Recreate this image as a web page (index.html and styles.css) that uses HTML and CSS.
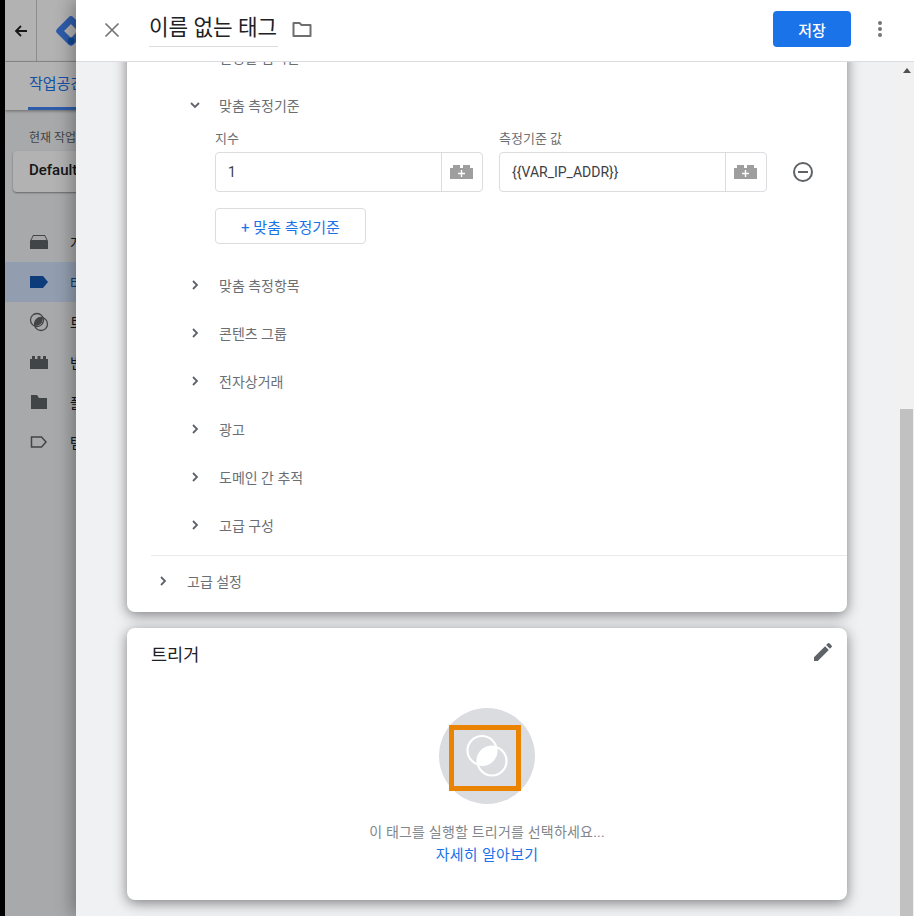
FILE: index.html
```html
<!DOCTYPE html>
<html lang="ko">
<head>
<meta charset="utf-8">
<title>이름 없는 태그</title>
<link rel="stylesheet" href="styles.css">
</head>
<body>
<div class="edge"></div>
<div class="stage">
  <div class="app">
    <div class="app-top">
      <div class="back">
        <svg width="16" height="16" viewBox="0 0 16 16"><path d="M14 8H3M8 3L3 8l5 5" fill="none" stroke="#202124" stroke-width="1.800"/></svg>
      </div>
      <svg class="logo" width="32" height="32" viewBox="0 0 32 32"><path d="M16 4.500L4.500 16 16 27.500 27.500 16z" fill="none" stroke="#4285f4" stroke-width="6.500" stroke-linejoin="round"/><circle cx="16" cy="26" r="3.500" fill="#1967d2"/></svg>
    </div>
    <div class="app-tabs"><span class="app-tab">작업공간</span></div>
    <div class="app-side">
      <div class="ws-label">현재 작업공간</div>
      <div class="ws-select">Default Workspace</div>
      <nav class="nav">
        <div class="nav-item"><svg width="20" height="20" viewBox="0 0 20 20"><path d="M4 3h12l3 6v8H1V9z" fill="#5f6368"/><path d="M4.500 4h11l2 4h-15z" fill="#eee"/></svg><span>개요</span></div>
        <div class="nav-item active"><svg width="20" height="20" viewBox="0 0 20 20"><path d="M1 4h13l5 6-5 6H1z" fill="#1557b0"/></svg><span>태그</span></div>
        <div class="nav-item"><svg width="20" height="20" viewBox="0 0 20 20"><circle cx="8" cy="8" r="6.500" fill="none" stroke="#5f6368" stroke-width="1.300"/><circle cx="12" cy="12" r="6.500" fill="none" stroke="#5f6368" stroke-width="1.300"/><path d="M13.500 5.700a6.500 6.500 0 0 1-7.800 7.800a6.500 6.500 0 0 1 7.800-7.800z" fill="#5f6368"/></svg><span>트리거</span></div>
        <div class="nav-item"><svg width="20" height="20" viewBox="0 0 20 20"><path d="M1 7h2V4h3v3h2.500V4h3v3H14V4h3v3h2v10H1z" fill="#5f6368"/></svg><span>변수</span></div>
        <div class="nav-item"><svg width="20" height="20" viewBox="0 0 20 20"><path d="M2 3h6l2 3h8v11H2z" fill="#5f6368"/></svg><span>폴더</span></div>
        <div class="nav-item"><svg width="20" height="20" viewBox="0 0 20 20"><path d="M2.500 5h10l4.500 5-4.500 5h-10z" fill="none" stroke="#5f6368" stroke-width="1.500"/></svg><span>템플릿</span></div>
      </nav>
    </div>
  </div>
  <div class="scrim"></div>

  <section class="sheet">
    <header class="sheet-head">
      <button class="icon-btn close" aria-label="닫기">
        <svg width="24" height="24" viewBox="0 0 24 24"><path d="M5.500 5.500l13 13M18.500 5.500l-13 13" fill="none" stroke="#757575" stroke-width="1.700"/></svg>
      </button>
      <h1 class="title">이름 없는 태그</h1>
      <svg class="folder" width="24" height="24" viewBox="0 0 24 24"><path d="M3.500 6h6l2 2h9v11h-17z" fill="none" stroke="#6e6e6e" stroke-width="2" stroke-linejoin="round"/></svg>
      <div class="spacer"></div>
      <button class="save">저장</button>
      <button class="icon-btn more" aria-label="더보기">
        <svg width="24" height="24" viewBox="0 0 24 24"><circle cx="12" cy="6" r="2" fill="#757575"/><circle cx="12" cy="12" r="2" fill="#757575"/><circle cx="12" cy="18" r="2" fill="#757575"/></svg>
      </button>
    </header>
    <div class="sheet-body">
      <div class="scroller">
        <div class="card config">
          <div class="nested">
            <div class="row"><svg class="chev" width="24" height="24" viewBox="0 0 24 24"><path d="M10 8l4 4-4 4" fill="none" stroke="#5f6368" stroke-width="1.800"/></svg><span>설정할 입력란</span></div>
            <div class="row"><svg class="chev" width="24" height="24" viewBox="0 0 24 24"><path d="M8 10l4 4 4-4" fill="none" stroke="#5f6368" stroke-width="1.800"/></svg><span>맞춤 측정기준</span></div>
            <div class="dims">
              <div class="dim-grid">
                <div class="field">
                  <label class="field-label">지수</label>
                  <div class="input"><span class="input-val">1</span><span class="input-btn"><svg width="24" height="14" viewBox="0 0 24 14"><path class="brick" fill-rule="evenodd" d="M0 3h3V0h7v3h3V0h7v3h3v11H0zM10.800 7.800H8v1.400h2.800V12h1.400V9.200H15V7.800h-2.800V5h-1.400z"/></svg></span></div>
                </div>
                <div class="field">
                  <label class="field-label">측정기준 값</label>
                  <div class="input"><span class="input-val">{{VAR_IP_ADDR}}</span><span class="input-btn"><svg width="24" height="14" viewBox="0 0 24 14"><path class="brick" fill-rule="evenodd" d="M0 3h3V0h7v3h3V0h7v3h3v11H0zM10.800 7.800H8v1.400h2.800V12h1.400V9.200H15V7.800h-2.800V5h-1.400z"/></svg></span></div>
                </div>
                <svg class="minus" width="24" height="24" viewBox="0 0 24 24"><circle cx="12" cy="12" r="9" fill="none" stroke="#5f6368" stroke-width="2"/><path d="M7 12h10" stroke="#5f6368" stroke-width="2"/></svg>
              </div>
              <button class="add-btn">+ 맞춤 측정기준</button>
            </div>
            <div class="row"><svg class="chev" width="24" height="24" viewBox="0 0 24 24"><path d="M10 8l4 4-4 4" fill="none" stroke="#5f6368" stroke-width="1.800"/></svg><span>맞춤 측정항목</span></div>
            <div class="row"><svg class="chev" width="24" height="24" viewBox="0 0 24 24"><path d="M10 8l4 4-4 4" fill="none" stroke="#5f6368" stroke-width="1.800"/></svg><span>콘텐츠 그룹</span></div>
            <div class="row"><svg class="chev" width="24" height="24" viewBox="0 0 24 24"><path d="M10 8l4 4-4 4" fill="none" stroke="#5f6368" stroke-width="1.800"/></svg><span>전자상거래</span></div>
            <div class="row"><svg class="chev" width="24" height="24" viewBox="0 0 24 24"><path d="M10 8l4 4-4 4" fill="none" stroke="#5f6368" stroke-width="1.800"/></svg><span>광고</span></div>
            <div class="row"><svg class="chev" width="24" height="24" viewBox="0 0 24 24"><path d="M10 8l4 4-4 4" fill="none" stroke="#5f6368" stroke-width="1.800"/></svg><span>도메인 간 추적</span></div>
            <div class="row"><svg class="chev" width="24" height="24" viewBox="0 0 24 24"><path d="M10 8l4 4-4 4" fill="none" stroke="#5f6368" stroke-width="1.800"/></svg><span>고급 구성</span></div>
          </div>
          <div class="advanced">
            <div class="row"><svg class="chev" width="24" height="24" viewBox="0 0 24 24"><path d="M10 8l4 4-4 4" fill="none" stroke="#5f6368" stroke-width="1.800"/></svg><span>고급 설정</span></div>
          </div>
        </div>

        <div class="card trigger">
          <div class="trigger-head">
            <h2 class="trigger-title">트리거</h2>
            <svg class="pencil" width="24" height="24" viewBox="0 0 24 24"><path d="M3 17.250V21h3.750L17.810 9.940l-3.750-3.750zM20.710 7.040a1 1 0 0 0 0-1.410l-2.340-2.340a1 1 0 0 0-1.410 0l-1.830 1.830 3.750 3.750z" fill="#5f6368"/></svg>
          </div>
          <div class="trigger-empty">
            <div class="trigger-circle">
              <svg width="96" height="96" viewBox="0 0 96 96">
                <defs><clipPath id="overlap"><circle cx="43" cy="42.500" r="14.500"/></clipPath></defs>
                <circle cx="53" cy="53" r="14.500" fill="#fff" clip-path="url(#overlap)"/>
                <circle cx="43" cy="42.500" r="14.500" fill="none" stroke="#fff" stroke-width="2.200"/>
                <circle cx="53" cy="53" r="14.500" fill="none" stroke="#fff" stroke-width="2.200"/>
              </svg>
              <div class="highlight"></div>
            </div>
            <p class="trigger-text">이 태그를 실행할 트리거를 선택하세요...</p>
            <a class="trigger-link">자세히 알아보기</a>
          </div>
        </div>
      </div>
      <div class="scrollbar">
        <div class="sb-arrow"></div>
        <div class="sb-track"></div>
        <div class="sb-thumb"></div>
      </div>
    </div>
  </section>
</div>
</body>
</html>
```
FILE: styles.css
```css
* { box-sizing: border-box; }
html, body { height: 100%; margin: 0; }
body {
  display: flex;
  overflow: hidden;
  background: #000;
  font-family: Roboto, "Noto Sans CJK KR", sans-serif;
  font-size: 14px;
  color: #5f6368;
}
.edge { width: 5px; flex: none; background: #000; }
.stage { position: relative; flex: 1; overflow: hidden; background: #fff; }

/* background application, dimmed behind the sheet */
.app { height: 100%; display: flex; flex-direction: column; background: #f1f3f4; }
.app-top { height: 62px; flex: none; display: flex; align-items: center; background: #fff; border-bottom: 1px solid #ccc; }
.back { width: 32px; height: 61px; display: flex; align-items: center; justify-content: center; border-right: 1px solid #ccc; }
.logo { margin-left: 18px; }
.app-tabs { height: 48px; flex: none; background: #fff; padding-left: 23px; box-shadow: 0 1px 3px rgba(0,0,0,.4); position: relative; }
.app-tab { display: inline-block; height: 48px; line-height: 45px; padding: 0 1px; border-bottom: 3px solid #4285f4; color: #1a73e8; font-size: 15px; }
.app-side { padding: 19px 0 0; flex: 1; }
.ws-label { padding-left: 24px; font-size: 12px; line-height: 18px; color: #5f6368; }
.ws-select { margin: 4px 0 0 8px; width: 200px; height: 41px; line-height: 39px; padding-left: 16px; background: #fff; border-radius: 4px; box-shadow: 0 1px 2px rgba(0,0,0,.4); color: #202124; font-size: 15px; font-weight: 500; white-space: nowrap; }
.nav { margin-top: 30px; }
.nav-item { height: 40px; display: flex; align-items: center; padding-left: 24px; gap: 21px; color: #202124; font-size: 14px; white-space: nowrap; }
.nav-item.active { background: #d2e3fc; color: #1557b0; }
.scrim { position: absolute; inset: 0; background: rgba(0,0,0,.3); }

/* sheet */
.sheet { position: absolute; top: 0; right: 0; bottom: 0; left: 71px; display: flex; flex-direction: column; background: #f1f3f4; box-shadow: -4px 0 16px rgba(0,0,0,.3); }
.sheet-head { height: 62px; flex: none; display: flex; align-items: center; padding-bottom: 3px; background: #fff; border-bottom: 1px solid #dadce0; position: relative; z-index: 2; }
.icon-btn { border: 0; background: none; padding: 0; display: flex; }
.close { margin: 1px 0 0 24px; }
.title { margin: 0 0 0 25px; width: 129px; height: 36px; line-height: 34px; border-bottom: 1px solid #dadce0; font-size: 21.300px; font-weight: 400; color: #202124; white-space: nowrap; }
.folder { margin-left: 12px; }
.spacer { flex: 1; }
.save { width: 78px; height: 36px; border: 0; border-radius: 4px; background: #1a73e8; color: #fff; font: 500 15px Roboto, "Noto Sans CJK KR", sans-serif; }
.more { margin: 0 22px 0 17px; }

.sheet-body { flex: 1; min-height: 0; display: flex; background: #f0f1f3; }
.scroller { flex: 1; min-width: 0; padding: 0 0 0 51px; margin-top: -40px; }
.card { width: 720px; background: #fff; border-radius: 8px; box-shadow: 0 3px 13px rgba(32,33,36,.55); }
.config { padding-top: 11px; height: 590px; }
.config .nested { padding-left: 56px; padding-bottom: 6px; }
.row { height: 48px; display: flex; align-items: center; gap: 12px; font-size: 14px; color: #6b6f74; }
.dims { padding: 0 0 17px 32px; }
.dim-grid { display: grid; grid-template-columns: 268px 268px 24px; column-gap: 16px; align-items: end; }
.field-label { display: block; height: 23px; line-height: 19px; font-size: 13px; color: #6b6f74; }
.input { display: flex; height: 40px; border: 1px solid #dadce0; border-radius: 4px; }
.input-val { flex: 1; padding-left: 12px; line-height: 38px; font-size: 14px; color: #3c4043; }
.input-btn { width: 41px; border-left: 1px solid #dadce0; display: flex; align-items: center; justify-content: center; }
.brick { fill: #9e9e9e; }
.minus { margin: 0 0 8px 8px; }
.add-btn { display: block; margin-top: 16px; width: 151px; height: 36px; border: 1px solid #dadce0; border-radius: 4px; background: #fff; color: #1a73e8; font: 400 15px Roboto, "Noto Sans CJK KR", sans-serif; }
.advanced { margin-left: 24px; border-top: 1px solid #e8eaed; padding-top: 1px; }

.trigger { margin-top: 16px; height: 272px; padding: 0 24px; }
.trigger-head { display: flex; justify-content: space-between; padding-top: 12px; height: 80px; }
.pencil { margin-right: -12px; }
.trigger-title { margin: 0; font-size: 17.500px; font-weight: 400; line-height: 30px; color: #202124; }
.trigger-empty { display: flex; flex-direction: column; align-items: center; }
.trigger-circle { position: relative; width: 96px; height: 96px; border-radius: 50%; background: #dadce0; }
.highlight { position: absolute; left: 10px; top: 17px; width: 72px; height: 66px; border: 5px solid #e98300; }
.trigger-text { margin: 18px 0 0; font-size: 14px; letter-spacing: .2px; line-height: 20px; color: #80868b; }
.trigger-link { margin-top: 3px; font-size: 15px; letter-spacing: .3px; line-height: 20px; color: #1a73e8; }

.scrollbar { width: 14px; flex: none; display: flex; flex-direction: column; background: #f1f1f1; position: relative; }
.sb-arrow { height: 17px; flex: none; display: flex; }
.sb-arrow::before { content: ""; margin: 6px 0 0 3px; border: 4px solid transparent; border-top: 0; border-bottom: 5px solid #505050; height: 0; }
.sb-track { flex: none; height: 330px; }
.sb-thumb { flex: 1; background: #c1c1c1; margin-right: 1px; }
```
